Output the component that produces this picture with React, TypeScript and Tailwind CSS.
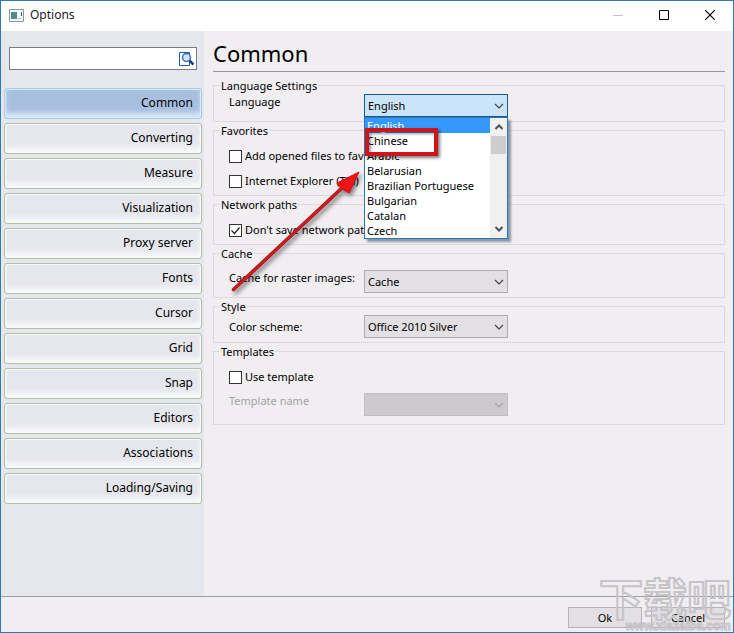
import { useState } from 'react';
import type { ReactNode } from 'react';
import clsx from 'clsx';

const pages = [
  'Common',
  'Converting',
  'Measure',
  'Visualization',
  'Proxy server',
  'Fonts',
  'Cursor',
  'Grid',
  'Snap',
  'Editors',
  'Associations',
  'Loading/Saving',
];

const languages = [
  'English',
  'Chinese',
  'Arabic',
  'Belarusian',
  'Brazilian Portuguese',
  'Bulgarian',
  'Catalan',
  'Czech',
];

function Chevron({ className }: { className?: string }) {
  return (
    <svg viewBox="0 0 10 6" fill="none" stroke="currentColor" className={clsx('h-[6px] w-[10px]', className)}>
      <path d="M1 1l4 4 4-4" strokeWidth="1.2" />
    </svg>
  );
}

function Group({ title, className, children }: { title: string; className: string; children: ReactNode }) {
  return (
    <fieldset className={clsx('border border-[#dcdadd] px-[15px]', className)}>
      <legend className="-ml-[9px] px-[1px] leading-[15px]">{title}</legend>
      {children}
    </fieldset>
  );
}

function Check({ label, checked, onChange }: { label: string; checked: boolean; onChange: (v: boolean) => void }) {
  return (
    <label className="flex h-4 items-center gap-[3px] whitespace-nowrap">
      <span className="relative flex size-[13px]">
        <input
          type="checkbox"
          checked={checked}
          onChange={(e) => onChange(e.target.checked)}
          className="size-[13px] appearance-none border border-[#333] bg-white"
        />
        {checked && (
          <svg viewBox="0 0 13 13" fill="none" stroke="#222" className="pointer-events-none absolute inset-0">
            <path d="M2.5 6.5l3 3 5-6" strokeWidth="1.2" />
          </svg>
        )}
      </span>
      {label}
    </label>
  );
}

type ComboProps = {
  id: string;
  label: string;
  options: string[];
  value: string;
  onChange: (v: string) => void;
  disabled?: boolean;
  open?: boolean;
  centered?: boolean;
  children?: ReactNode;
};

function Combo({ id, label, options, value, onChange, disabled, open, centered, children }: ComboProps) {
  return (
    <div className={clsx('grid grid-cols-[135px_144px]', centered ? 'items-center' : 'items-start')}>
      <label htmlFor={id} className={clsx('leading-4 whitespace-nowrap', disabled && 'text-[#a3a3a3]')}>
        {label}
      </label>
      <div className="relative">
        <select
          id={id}
          value={value}
          disabled={disabled}
          onChange={(e) => onChange(e.target.value)}
          className={clsx(
            'block h-[23px] w-full appearance-none border px-[3px] leading-4',
            open && 'border-[#1c5a8c] bg-[#cce4f9]',
            !open && !disabled && 'border-[#adadad] bg-[#e2e0e2]',
            disabled && 'border-[#bfbfbf] bg-[#cccacd]',
          )}
        >
          {options.map((o) => (
            <option key={o}>{o}</option>
          ))}
        </select>
        <Chevron
          className={clsx(
            'pointer-events-none absolute top-[9px] right-1',
            disabled ? 'text-[#a5a5a5]' : 'text-[#444]',
          )}
        />
        {children}
      </div>
    </div>
  );
}

function LanguageList({ value, onPick }: { value: string; onPick: (v: string) => void }) {
  return (
    <div className="absolute top-full left-0 z-10 flex w-full border border-[#2a76ae] bg-white shadow-[3px_3px_2px_rgba(70,95,125,0.6)]">
      <ul role="listbox" aria-label="Languages" className="flex-1 whitespace-nowrap">
        {languages.map((l) => (
          <li
            key={l}
            role="option"
            aria-selected={l === value}
            onClick={() => onPick(l)}
            className={clsx('px-[2px] leading-[15px]', l === value && 'bg-[#3399ff] text-white')}
          >
            {l}
          </li>
        ))}
      </ul>
      <div className="flex w-[17px] flex-col items-center bg-[#f0f0f0] text-[#505050]">
        <svg viewBox="0 0 10 6" fill="none" stroke="currentColor" strokeWidth="2" className="my-[6px] h-[6px] w-[10px]">
          <path d="M1.5 5l3.5-3.5 3.5 3.5" />
        </svg>
        <div className="h-[18px] w-[15px] bg-[#cdcdcd]" />
        <svg viewBox="0 0 10 6" fill="none" stroke="currentColor" strokeWidth="2" className="mt-auto mb-[6px] h-[6px] w-[10px]">
          <path d="M1.5 1l3.5 3.5 3.5-3.5" />
        </svg>
      </div>
      {/* highlight around the second entry */}
      <div className="pointer-events-none absolute top-[10px] left-0 h-7 w-[73px] border-4 border-[#cc161c] shadow-[2px_2px_3px_rgba(0,0,0,0.5),inset_2px_2px_3px_rgba(0,0,0,0.4)]" />
    </div>
  );
}

function Pointer() {
  return (
    <svg
      viewBox="0 0 134 126"
      className="pointer-events-none absolute top-[75px] -left-[135px] z-20 h-[126px] w-[134px] drop-shadow-[2px_3px_2px_rgba(0,0,0,0.5)]"
    >
      <path d="M4.5 120.5L114 18" stroke="#a51418" strokeWidth="3.5" strokeLinecap="round" />
      <path d="M4.5 120.5L114 18" stroke="#d01d22" strokeWidth="2" strokeLinecap="round" />
      <path d="M130 3l-22 11 4 5 8 5z" fill="#f01216" stroke="#d01014" />
    </svg>
  );
}

function TitleBar() {
  return (
    <header className="flex h-[30px] items-center bg-white pb-[2px] pl-[8px]">
      <svg viewBox="0 0 15 13" className="h-[13px] w-[15px]">
        <path d="M.5.5h14v12H.5z" fill="#f3f6f6" stroke="#8b959a" />
        <path d="M2 3h6v7H2z" fill="#4a8f86" />
        <path d="M9 9h3v1H9z" fill="#a0c8c0" />
        <path d="M12 3h1v4h-1z" fill="#35506b" />
      </svg>
      <h1 className="ml-[6px] flex-1 text-[12px] text-[#222]">Options</h1>
      <button aria-label="Minimize" className="flex w-[46px] justify-center text-[#c4c4c4]">
        <svg viewBox="0 0 10 10" stroke="currentColor" className="size-[10px]">
          <path d="M0 5.5h10" />
        </svg>
      </button>
      <button aria-label="Maximize" className="flex w-[46px] justify-center">
        <svg viewBox="0 0 10 10" fill="none" stroke="currentColor" className="size-[10px]">
          <path d="M.5.5h9v9h-9z" />
        </svg>
      </button>
      <button aria-label="Close" className="flex w-[46px] justify-center">
        <svg viewBox="0 0 10 10" stroke="currentColor" className="size-[10px]">
          <path d="M0 0l10 10M10 0L0 10" strokeWidth="1.2" />
        </svg>
      </button>
    </header>
  );
}

function Sidebar({ page, onPage }: { page: string; onPage: (p: string) => void }) {
  return (
    <aside className="w-[203px] shrink-0 bg-[#e6e7ec] pt-4 pr-[2px] pl-[3px]">
      <div className="mr-[5px] ml-[5px] flex h-[23px] items-center border border-[#7a7a80] bg-white pr-[2px]">
        <input type="text" aria-label="Search options" className="h-full min-w-0 flex-1 px-1 outline-none" />
        <svg viewBox="0 0 16 16" fill="none" className="size-4">
          <path d="M1.5 1.5h10v13h-10z" fill="#fff" stroke="#2558b0" />
          <circle cx="8.5" cy="6.5" r="4" fill="#cfe6fb" stroke="#3a6cc0" strokeWidth="1.5" />
          <path d="M11.5 9.5l4 4" stroke="#163f8c" strokeWidth="2.5" />
        </svg>
      </div>
      <nav className="mt-[18px] flex flex-col gap-1 text-[12px]">
        {pages.map((p) => (
          <button
            key={p}
            onClick={() => onPage(p)}
            className={clsx(
              'h-[31px] rounded-[3px] border pr-2 pb-px text-right',
              p === page
                ? 'border-[#a9cbe6] bg-[#a8bfe0] shadow-[inset_0_0_0_1px_#dcebf8,inset_0_-5px_5px_#dbe7f6]'
                : 'border-[#b3bfa5] bg-[#e6e7ed] shadow-[inset_0_0_0_1px_#f8f9f9,inset_0_-5px_5px_#fafafb]',
            )}
          >
            {p}
          </button>
        ))}
      </nav>
    </aside>
  );
}

function Watermark() {
  return (
    <div
      aria-hidden="true"
      className="pointer-events-none absolute right-0 bottom-0 flex flex-col items-end whitespace-nowrap text-transparent"
    >
      <span className="pr-[2px] font-['Noto_Sans_CJK_SC',sans-serif] text-[44px] leading-[46px] font-bold [-webkit-text-stroke:2px_#c6c4c7]">
        下载吧
      </span>
      <span className="pr-[2px] font-['Liberation_Sans',sans-serif] text-[12px] leading-[12px] font-bold [-webkit-text-stroke:1px_#c4c2c5]">
        www.xiazaiba.com
      </span>
    </div>
  );
}

export default function App() {
  const [page, setPage] = useState('Common');
  const [language, setLanguage] = useState('English');
  const [cache, setCache] = useState('Cache');
  const [scheme, setScheme] = useState('Office 2010 Silver');
  const [favorites, setFavorites] = useState(false);
  const [explorer, setExplorer] = useState(false);
  const [network, setNetwork] = useState(true);
  const [template, setTemplate] = useState(false);

  return (
    <div className="relative flex min-h-screen flex-col border border-[#2f7ab5] bg-[#f0eef1] font-['Noto_Sans',sans-serif] text-[11px] leading-4 text-black">
      <TitleBar />
      <div className="flex flex-1">
        <Sidebar page={page} onPage={setPage} />
        <main className="min-w-0 flex-1 pt-2 pr-2 pl-[9px]">
          <h2 className="border-b border-[#98969a] pb-1 text-[22px] leading-7">{page}</h2>
          <div className="mt-[6px] flex flex-col gap-px">
            <Group title="Language Settings" className="pt-px pb-1">
              <Combo
                id="language"
                label="Language"
                options={languages}
                value={language}
                onChange={setLanguage}
                open
              >
                <LanguageList value={language} onPick={setLanguage} />
                <Pointer />
              </Combo>
            </Group>
            <Group title="Favorites" className="pt-[10px] pb-[6px]">
              <div className="flex flex-col gap-[9px]">
                <Check label="Add opened files to favorites" checked={favorites} onChange={setFavorites} />
                <Check label="Internet Explorer (TM)" checked={explorer} onChange={setExplorer} />
              </div>
            </Group>
            <Group title="Network paths" className="pt-[10px] pb-[6px]">
              <Check label="Don't save network paths" checked={network} onChange={setNetwork} />
            </Group>
            <Group title="Cache" className="pt-[9px] pb-1">
              <Combo
                id="cache"
                label="Cache for raster images:"
                options={['Cache', 'No cache']}
                value={cache}
                onChange={setCache}
              />
            </Group>
            <Group title="Style" className="pt-px pb-1">
              <Combo
                id="scheme"
                label="Color scheme:"
                options={['Office 2010 Silver', 'Office 2010 Blue']}
                value={scheme}
                onChange={setScheme}
                centered
              />
            </Group>
            <Group title="Templates" className="pt-[10px] pb-2">
              <div className="flex flex-col gap-2">
                <Check label="Use template" checked={template} onChange={setTemplate} />
                <Combo
                  id="template"
                  label="Template name"
                  options={['']}
                  value=""
                  onChange={() => {}}
                  disabled={!template}
                />
              </div>
            </Group>
          </div>
        </main>
      </div>
      <footer className="flex justify-end gap-[9px] border-t border-[#98a0a6] pt-[10px] pr-2 pb-1">
        <button className="h-[21px] w-[74px] border border-[#b5b3b6] bg-[#e2e0e3]">Ok</button>
        <button className="h-[21px] w-[74px] border border-[#b5b3b6] bg-[#e2e0e3]">Cancel</button>
      </footer>
      <Watermark />
    </div>
  );
}
